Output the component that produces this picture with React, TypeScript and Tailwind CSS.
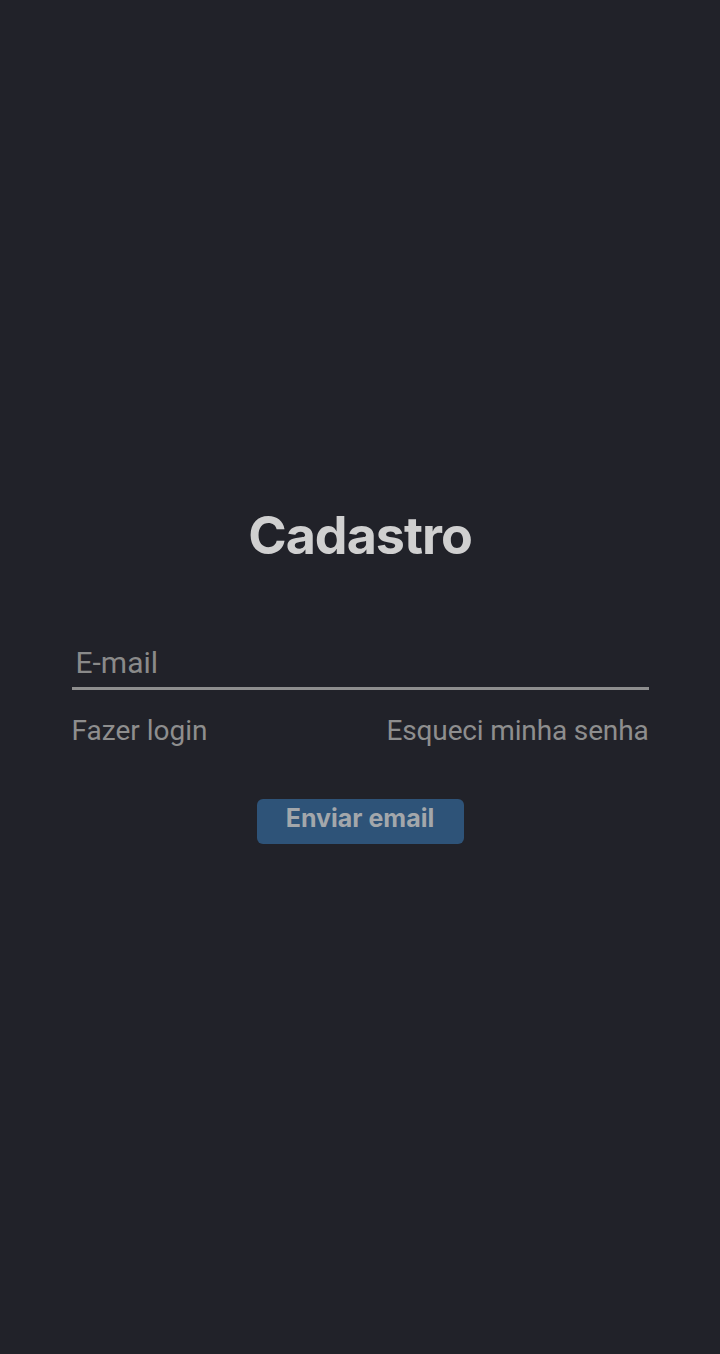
export default function App() {
  return (
    <div className="w-[720px] h-[1354px] bg-[#212229] flex flex-col items-center" style={{ fontFamily: "Roboto, 'Liberation Sans', sans-serif" }}>
      <h1 className="mt-[502px] text-[52px] font-bold leading-[68px] text-[#d0d0d0] tracking-[-1px]" style={{ fontFamily: "Inter, 'Liberation Sans', sans-serif" }}>
        Cadastro
      </h1>
      <div className="mt-[75px] w-[577px]">
        <input
          placeholder="E-mail"
          className="w-full bg-transparent outline-none border-b-[3px] border-[#8e8e8e] px-[4px] pb-[6px] text-[30px] leading-[36px] text-[#d0d0d0] placeholder:text-[#8a8a8a]"
        />
        <div className="mt-[23px] flex justify-between text-[28px] leading-[36px] text-[#8e8e8e]">
          <span>Fazer login</span>
          <span className="tracking-[-0.15px]">Esqueci minha senha</span>
        </div>
      </div>
      <button className="mt-[50px] w-[207px] h-[45px] pb-[7px] rounded-[6px] bg-[#2e5378] text-[#a3a7ab] text-[25px] font-bold leading-[34px]" style={{ fontFamily: "Inter, 'Liberation Sans', sans-serif" }}>
        Enviar email
      </button>
    </div>
  );
}
